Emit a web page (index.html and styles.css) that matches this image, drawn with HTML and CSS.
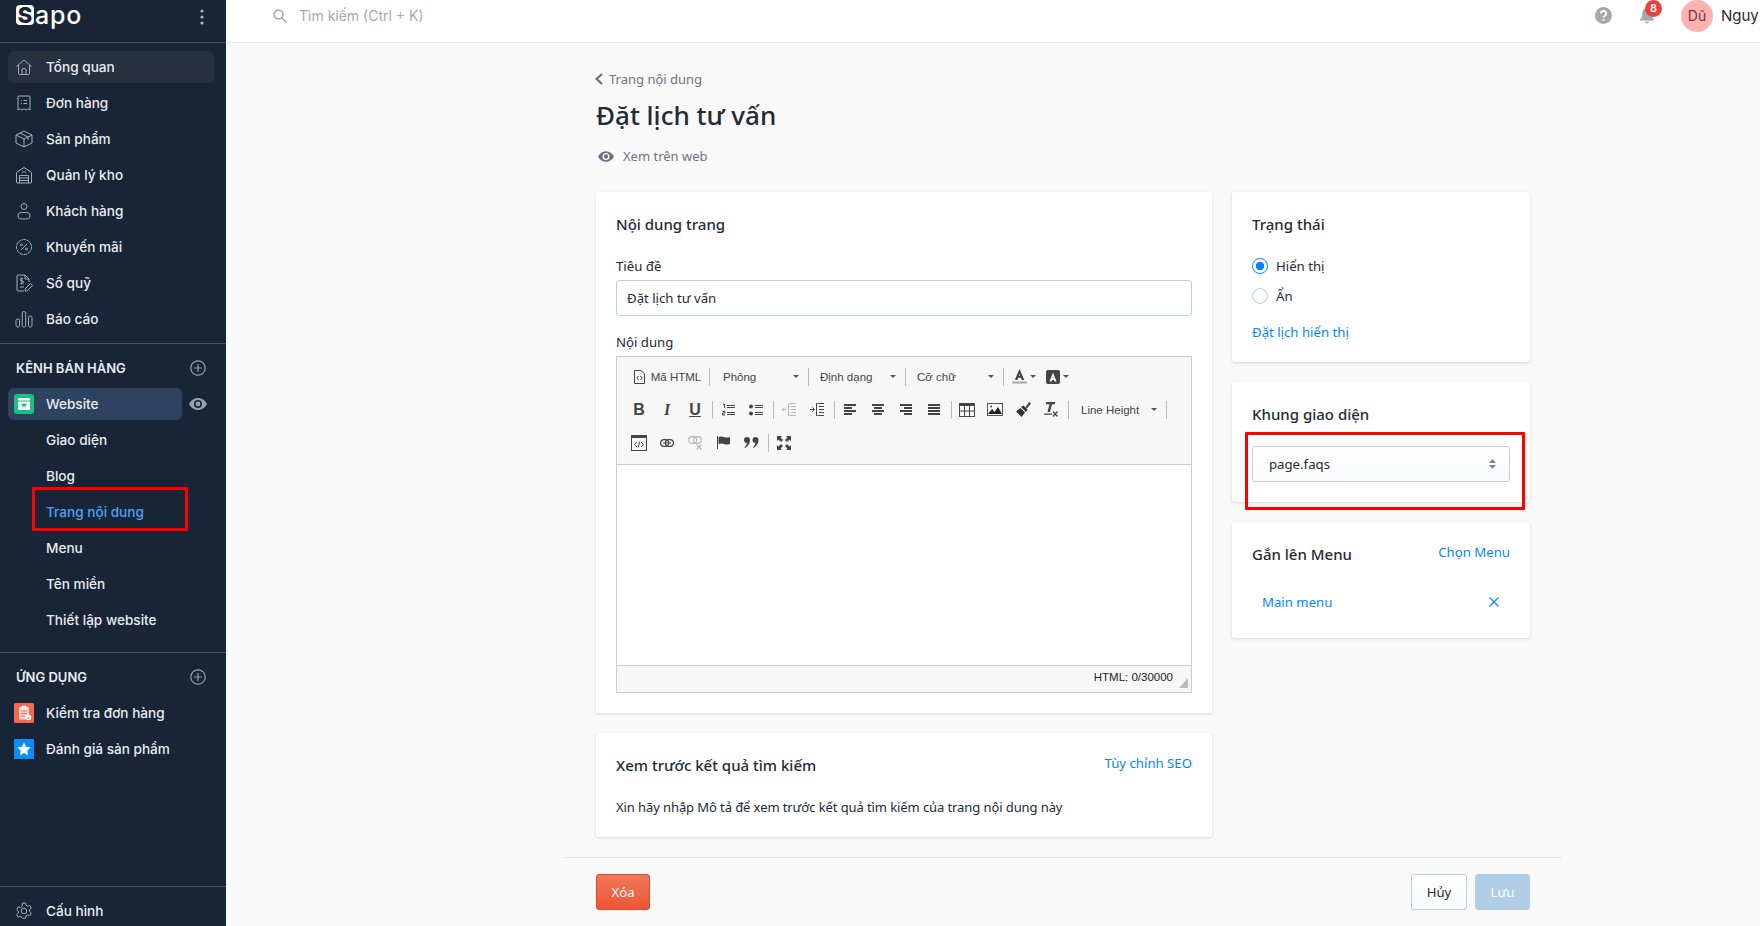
FILE: index.html
```html
<!DOCTYPE html>
<html lang="vi">
<head>
  <meta charset="UTF-8">
  <meta name="viewport" content="width=device-width, initial-scale=1.0">
  <title>Đặt lịch tư vấn</title>
  <link rel="stylesheet" href="styles.css">
</head>
<body>

<!-- Sidebar -->
<aside class="sidebar">
  <div class="logo-row">
    <div class="logo"><span class="logo-s">S</span><span class="logo-rest">apo</span></div>
    <svg class="kebab" width="4" height="16" viewBox="0 0 4 16"><circle cx="2" cy="2" r="1.6"/><circle cx="2" cy="8" r="1.6"/><circle cx="2" cy="14" r="1.6"/></svg>
  </div>

  <nav class="nav-group">
    <a class="nav-item nav-item-current">
      <span class="nav-icon"><svg class="ico" width="18" height="18" viewBox="0 0 18 18"><path d="M1.5 8.5 9 2l7.500 6.500"/><path d="M3.500 7v8.500a1 1 0 0 0 1 1h9a1 1 0 0 0 1-1V7"/><path d="M7 16.500V11.500a1 1 0 0 1 1-1h2a1 1 0 0 1 1 1v5"/></svg></span>Tổng quan
    </a>
    <a class="nav-item">
      <span class="nav-icon"><svg class="ico" width="18" height="18" viewBox="0 0 18 18"><path d="M3 3a1 1 0 0 1 1-1h10a1 1 0 0 1 1 1v13l-2-1.200-2 1.200-2-1.200-2 1.200-2-1.200L3 16z"/><path d="M6 6.500h.8M8.500 6.500H12M6 9.500h.8M8.500 9.500H12"/></svg></span>Đơn hàng
    </a>
    <a class="nav-item">
      <span class="nav-icon"><svg class="ico" width="18" height="18" viewBox="0 0 18 18"><path d="M9 1 1 5v8l8 4 8-4V5z"/><path d="M1 5l8 4 8-4M9 9v8M5 3l8 4v3"/></svg></span>Sản phẩm
    </a>
    <a class="nav-item">
      <span class="nav-icon"><svg class="ico" width="18" height="18" viewBox="0 0 18 18"><path d="M1.500 6.500 9 1.500l7.500 5V16a1 1 0 0 1-1 1h-13a1 1 0 0 1-1-1z"/><path d="M4.500 17V9.500h9V17M4.500 12h9M4.500 14.500h9M7 6h4"/></svg></span>Quản lý kho
    </a>
    <a class="nav-item">
      <span class="nav-icon"><svg class="ico" width="18" height="18" viewBox="0 0 18 18"><circle cx="9" cy="4.500" r="3"/><rect x="3" y="10.500" width="12" height="6.500" rx="3.200"/></svg></span>Khách hàng
    </a>
    <a class="nav-item">
      <span class="nav-icon"><svg class="ico" width="18" height="18" viewBox="0 0 18 18"><circle cx="9" cy="9" r="7.500" stroke-dasharray="3.600 .6"/><path d="M6 12 12 6"/><circle cx="6.500" cy="6.800" r="1"/><circle cx="11.500" cy="11.200" r="1"/></svg></span>Khuyến mãi
    </a>
    <a class="nav-item">
      <span class="nav-icon"><svg class="ico" width="18" height="18" viewBox="0 0 18 18"><path d="M9 17H3a1 1 0 0 1-1-1V2a1 1 0 0 1 1-1h7l4 4v3"/><path d="M10 1v4h4"/><path d="M8 4.500H6.500a1 1 0 0 0 0 2.500h.8a1 1 0 0 1 0 2.500H5.500M6.800 3.500v7M5 13h4"/><path d="m10 17 .5-2.500 5-5 2 2-5 5z"/></svg></span>Sổ quỹ
    </a>
    <a class="nav-item">
      <span class="nav-icon"><svg class="ico" width="18" height="18" viewBox="0 0 18 18"><rect x="1" y="9" width="3.500" height="8" rx="1.500"/><rect x="7.200" y="1.500" width="3.500" height="15.500" rx="1.500"/><rect x="13.500" y="6" width="3.500" height="11" rx="1.500"/></svg></span>Báo cáo
    </a>
  </nav>

  <section class="nav-section">
    <div class="section-head">
      <span>KÊNH BÁN HÀNG</span>
      <svg class="ico section-add" width="16" height="16" viewBox="0 0 16 16"><circle cx="8" cy="8" r="7.200"/><path d="M8 4v8M4 8h8"/></svg>
    </div>
    <div class="channel-row">
      <a class="nav-item nav-item-channel">
        <span class="nav-icon">
          <svg width="20" height="20" viewBox="0 0 20 20"><rect width="20" height="20" rx="3" fill="#1cbf82"/><rect x="4" y="4" width="12" height="12" rx="1" fill="#fff"/><rect x="4" y="6.500" width="12" height="1" fill="#1cbf82"/><path d="M7.500 9.500h5l-.7 3H8.300zM8.500 13.500h.8v.8h-.8zM11 13.500h.8v.8H11z" fill="#1cbf82"/></svg>
        </span>Website
      </a>
      <svg class="channel-eye" width="18" height="12" viewBox="0 0 18 12"><path d="M9 0C5 0 1.800 2.400 0 6c1.800 3.600 5 6 9 6s7.200-2.400 9-6c-1.800-3.600-5-6-9-6zm0 10a4 4 0 1 1 0-8 4 4 0 0 1 0 8zm0-6.400a2.400 2.400 0 1 0 0 4.800 2.400 2.400 0 0 0 0-4.800z"/></svg>
    </div>
    <a class="nav-item nav-sub">Giao diện</a>
    <a class="nav-item nav-sub">Blog</a>
    <a class="nav-item nav-sub nav-sub-active">Trang nội dung<span class="red-mark red-mark-nav"></span></a>
    <a class="nav-item nav-sub">Menu</a>
    <a class="nav-item nav-sub">Tên miền</a>
    <a class="nav-item nav-sub">Thiết lập website</a>
  </section>

  <section class="nav-section">
    <div class="section-head">
      <span>ỨNG DỤNG</span>
      <svg class="ico section-add" width="16" height="16" viewBox="0 0 16 16"><circle cx="8" cy="8" r="7.200"/><path d="M8 4v8M4 8h8"/></svg>
    </div>
    <a class="nav-item">
      <span class="nav-icon">
        <svg width="20" height="20" viewBox="0 0 20 20"><rect width="20" height="20" rx="1.500" fill="#f2694f"/><rect x="5" y="4" width="10" height="12.500" rx="1" fill="#fbd9d0"/><rect x="7.500" y="2.800" width="5" height="2.500" rx=".8" fill="#fff"/><path d="M7 8h6M7 10.500h6M7 13h4" stroke="#f2694f"/><circle cx="14.500" cy="14.500" r="2.800" fill="#fff"/><path d="m13.200 14.500 1 1 1.600-1.800" stroke="#f2694f" fill="none"/></svg>
      </span>Kiểm tra đơn hàng
    </a>
    <a class="nav-item">
      <span class="nav-icon">
        <svg width="20" height="20" viewBox="0 0 20 20"><rect width="20" height="20" fill="#0a8dfa"/><path d="m10 3.500 2 4.300 4.700.6-3.500 3.200.9 4.700-4.100-2.300-4.100 2.300.9-4.700-3.500-3.200 4.700-.6z" fill="#fff"/></svg>
      </span>Đánh giá sản phẩm
    </a>
  </section>

  <div class="sidebar-foot">
    <a class="nav-item">
      <span class="nav-icon"><svg class="ico" width="18" height="18" viewBox="0 0 18 18"><circle cx="9" cy="9" r="2.800"/><path d="M7.500 1h3l.5 2.300 1.600.9 2.200-.7 1.500 2.600-1.700 1.600v1.800l1.700 1.600-1.500 2.600-2.200-.7-1.600.9-.5 2.300h-3L7 15.300l-1.600-.9-2.200.7-1.500-2.600 1.700-1.600V9.100L1.700 7.500l1.500-2.600 2.200.7L7 4.700z" stroke-linejoin="round"/></svg></span>Cấu hình
    </a>
  </div>
</aside>

<div class="main">
  <!-- Top bar -->
  <header class="topbar">
    <svg class="search-icon" width="14" height="14" viewBox="0 0 14 14"><circle cx="5.500" cy="5.500" r="4.500"/><path d="m9 9 4.500 4.500"/></svg>
    <span class="search-text">Tìm kiếm (Ctrl + K)</span>
    <div class="topbar-right">
      <svg class="help-icon" width="17" height="17" viewBox="0 0 17 17"><circle cx="8.500" cy="8.500" r="8.500" fill="#a3a8af"/><path d="M5.900 6.500a2.600 2.600 0 1 1 3.900 2.200c-.9.500-1.300.9-1.300 1.800" fill="none" stroke="#fff" stroke-width="1.800"/><circle cx="8.500" cy="13" r="1.100" fill="#fff"/></svg>
      <div class="bell">
        <svg width="14" height="16" viewBox="0 0 14 16"><path d="M7 0c3 0 4.600 2.300 4.600 5.200 0 3 .8 4.700 2.400 6.300v1H0v-1c1.600-1.600 2.400-3.300 2.400-6.300C2.400 2.300 4 0 7 0zM5.300 13.500h3.400A1.700 1.700 0 0 1 7 15.500a1.700 1.700 0 0 1-1.700-2z" fill="#a3a8af"/></svg>
        <span class="bell-badge">8</span>
      </div>
      <span class="avatar">Dũ</span>
      <span class="user-name">Nguy</span>
    </div>
  </header>

  <main class="page">
    <a class="back-link">
      <svg class="back-arrow" width="8" height="12" viewBox="0 0 8 12"><path d="M7 1 1.500 6 7 11" fill="none" stroke="#5f6b7a" stroke-width="2"/></svg>
      Trang nội dung
    </a>
    <h1 class="page-title">Đặt lịch tư vấn</h1>
    <a class="view-link">
      <svg width="16" height="11" viewBox="0 0 18 12"><path fill="#637381" d="M9 0C5 0 1.800 2.400 0 6c1.800 3.600 5 6 9 6s7.200-2.400 9-6c-1.800-3.600-5-6-9-6zm0 10a4 4 0 1 1 0-8 4 4 0 0 1 0 8zm0-6.400a2.400 2.400 0 1 0 0 4.800 2.400 2.400 0 0 0 0-4.800z"/></svg>
      Xem trên web
    </a>

    <div class="page-grid">
      <!-- Left column -->
      <div class="page-col">
        <section class="card">
          <h2 class="card-title">Nội dung trang</h2>
          <label class="field-label field-first">Tiêu đề</label>
          <div class="text-input">Đặt lịch tư vấn</div>
          <label class="field-label">Nội dung</label>

          <div class="editor">
            <div class="toolbar">
              <div class="tb-row">
                <span class="tb-btn tb-html">
                  <svg class="tb-svg" width="11" height="14" viewBox="0 0 11 14"><path d="M.5.500h6.500l3.500 3.500v9.500H.5z" fill="none" stroke="#444"/><path d="M4.500 6 2.800 8l1.700 2M6.500 6l1.700 2-1.700 2" fill="none" stroke="#444"/></svg>
                  Mã HTML
                </span>
                <span class="tb-sep"></span>
                <span class="tb-btn tb-drop tb-font">Phông<i class="caret"></i></span>
                <span class="tb-sep"></span>
                <span class="tb-btn tb-drop tb-format">Định dạng<i class="caret"></i></span>
                <span class="tb-sep"></span>
                <span class="tb-btn tb-drop tb-size">Cỡ chữ<i class="caret"></i></span>
                <span class="tb-sep"></span>
                <span class="tb-btn tb-color">
                  <svg width="15" height="15" viewBox="0 0 15 15"><path d="M7.500 0 2.800 11h2.600l.8-2.200h2.700l.8 2.200h2.600zM6.900 6.800l.6-2 .6 2z" fill="#444"/><rect y="12.500" width="15" height="2" fill="#aaa"/></svg><i class="caret"></i>
                </span>
                <span class="tb-btn tb-color">
                  <svg width="14" height="14" viewBox="0 0 14 14"><rect width="14" height="14" rx="2" fill="#444"/><path d="M7 2.500 3.500 11.500h2l.5-1.600h2l.5 1.600h2zM6.500 8.200 7 6.500l.5 1.700z" fill="#fff"/></svg><i class="caret"></i>
                </span>
              </div>

              <div class="tb-row">
                <span class="tb-btn"><b class="tb-b">B</b></span>
                <span class="tb-btn"><i class="tb-i">I</i></span>
                <span class="tb-btn"><u class="tb-u">U</u></span>
                <span class="tb-sep"></span>
                <span class="tb-btn"><svg width="13" height="13" viewBox="0 0 13 13"><path d="M5 2.500h8M5 9.500h8M5 4.500h8M5 11.500h8" stroke="#444"/><path d="M1 1h1.500v4M.5 8.500h2.500v1.500H.5V12H3" fill="none" stroke="#444"/></svg></span>
                <span class="tb-btn"><svg width="14" height="12" viewBox="0 0 14 12"><circle cx="2" cy="2.500" r="2" fill="#444"/><circle cx="2" cy="9.500" r="2" fill="#444"/><path d="M6 1.500h8M6 3.500h8M6 8.500h8M6 10.500h8" stroke="#444"/></svg></span>
                <span class="tb-sep"></span>
                <span class="tb-btn tb-muted"><svg width="14" height="13" viewBox="0 0 14 13"><path d="M7.500.5h6.500M9 3.500h5M9 6.500h5M9 9.500h5M7.500 12.500h6.500M6.500 0v13M4.500 6.500H0M2 4.500 0 6.500l2 2" fill="none" stroke="#444"/></svg></span>
                <span class="tb-btn"><svg width="14" height="13" viewBox="0 0 14 13"><path d="M7.500.5h6.500M9 3.500h5M9 6.500h5M9 9.500h5M7.500 12.500h6.500M6.500 0v13M0 6.500h4.500M2.500 4.500l2 2-2 2" fill="none" stroke="#444"/></svg></span>
                <span class="tb-sep"></span>
                <span class="tb-btn"><svg width="12" height="11" viewBox="0 0 12 11"><path d="M0 1h12M0 4h8M0 7h12M0 10h8" stroke="#444" stroke-width="1.800"/></svg></span>
                <span class="tb-btn"><svg width="12" height="11" viewBox="0 0 12 11"><path d="M0 1h12M2 4h8M0 7h12M2 10h8" stroke="#444" stroke-width="1.800"/></svg></span>
                <span class="tb-btn"><svg width="12" height="11" viewBox="0 0 12 11"><path d="M0 1h12M4 4h8M0 7h12M4 10h8" stroke="#444" stroke-width="1.800"/></svg></span>
                <span class="tb-btn"><svg width="12" height="11" viewBox="0 0 12 11"><path d="M0 1h12M0 4h12M0 7h12M0 10h12" stroke="#444" stroke-width="1.800"/></svg></span>
                <span class="tb-sep"></span>
                <span class="tb-btn"><svg width="16" height="14" viewBox="0 0 16 14"><rect x=".5" y=".5" width="15" height="13" fill="none" stroke="#444"/><rect width="16" height="3" fill="#444"/><path d="M5.500 3v10M10.500 3v10M0 8h16" stroke="#444"/></svg></span>
                <span class="tb-btn"><svg width="16" height="13" viewBox="0 0 16 13"><rect x=".5" y=".5" width="15" height="12" fill="none" stroke="#555"/><path d="m1 11 4-5 2.500 3L11 4l4 7z" fill="#222"/><circle cx="4" cy="3.500" r="1" fill="#444"/></svg></span>
                <span class="tb-btn"><svg width="15" height="15" viewBox="0 0 15 15"><path d="m9.500 5 3.500-5 2 1.500L11 6.500z" fill="#444"/><path d="m5 5 2.500-1.500 4 4L10 10z M4.500 6 9 10.500 5.500 15 0 9.500z" fill="#333"/></svg></span>
                <span class="tb-btn"><svg width="14" height="15" viewBox="0 0 14 15"><path d="M2 0h9v2.200H8L6 10H3.500l2-7.800H2z M0 11.500h8v1.200H0z" fill="#444"/><path d="m9 9.500 4.500 5M13.500 9.500l-4.500 5" stroke="#444" stroke-width="1.300"/></svg></span>
                <span class="tb-sep"></span>
                <span class="tb-btn tb-drop tb-line">Line Height<i class="caret"></i></span>
                <span class="tb-sep"></span>
              </div>

              <div class="tb-row">
                <span class="tb-btn"><svg width="16" height="16" viewBox="0 0 16 16"><rect x=".5" y=".5" width="15" height="15" fill="none" stroke="#444"/><rect width="16" height="3" fill="#444"/><path d="M6 7 3.500 9.500 6 12M10 7l2.500 2.500L10 12M8.800 6.500l-1.600 6" fill="none" stroke="#444"/></svg></span>
                <span class="tb-btn"><svg width="14" height="8" viewBox="0 0 14 8"><rect x=".6" y=".6" width="8" height="6.800" rx="3.400" fill="none" stroke="#444" stroke-width="1.200"/><rect x="5.400" y=".6" width="8" height="6.800" rx="3.400" fill="none" stroke="#444" stroke-width="1.200"/><path d="M3 4h8" stroke="#444"/></svg></span>
                <span class="tb-btn tb-muted"><svg width="14" height="14" viewBox="0 0 14 14"><rect x=".6" y=".6" width="8" height="6.800" rx="3.400" fill="none" stroke="#444" stroke-width="1.200"/><rect x="5.400" y=".6" width="8" height="6.800" rx="3.400" fill="none" stroke="#444" stroke-width="1.200"/><path d="m8.500 8.500 5 5M13.500 8.500l-5 5" stroke="#444" stroke-width="1.300"/></svg></span>
                <span class="tb-btn"><svg width="13" height="13" viewBox="0 0 13 13"><path d="M.5 0v13" stroke="#444"/><path d="M1.500 1c2-.8 3.500-.8 5.500 0s3.500.8 6 0v7c-2.500.8-4 .8-6 0s-3.500-.8-5.500 0z" fill="#444"/></svg></span>
                <span class="tb-btn"><svg width="15" height="11" viewBox="0 0 15 11"><path d="M3 0a3 3 0 0 1 3 3c0 3.500-2 6.500-5 8l-.5-.8C2 9 2.800 7.500 3 6a3 3 0 0 1 0-6zM11.500 0a3 3 0 0 1 3 3c0 3.500-2 6.500-5 8l-.5-.8c1.500-1.200 2.300-2.700 2.500-4.200a3 3 0 0 1 0-6z" fill="#444"/></svg></span>
                <span class="tb-sep"></span>
                <span class="tb-btn"><svg width="14" height="14" viewBox="0 0 14 14"><path d="M0 0h5L3.500 1.500 6 4 4 6 1.500 3.500 0 5zM14 0v5l-1.500-1.500L10 6 8 4l2.500-2.500L9 0zM0 14V9l1.500 1.500L4 8l2 2-2.500 2.500L5 14zM14 14H9l1.500-1.500L8 10l2-2 2.500 2.500L14 9z" fill="#444"/></svg></span>
              </div>
            </div>
            <div class="editor-body"></div>
            <div class="editor-status">
              <span>HTML: 0/30000</span>
              <i class="resize-grip"></i>
            </div>
          </div>
        </section>

        <section class="card card-seo">
          <div class="card-head">
            <h2 class="card-title">Xem trước kết quả tìm kiếm</h2>
            <a class="link">Tùy chỉnh SEO</a>
          </div>
          <p class="seo-text">Xin hãy nhập Mô tả để xem trước kết quả tìm kiếm của trang nội dung này</p>
        </section>
      </div>

      <!-- Right column -->
      <div class="page-col">
        <section class="card">
          <h2 class="card-title">Trạng thái</h2>
          <div class="radio-row radio-first"><span class="radio radio-on"></span>Hiển thị</div>
          <div class="radio-row"><span class="radio"></span>Ẩn</div>
          <a class="link schedule-link">Đặt lịch hiển thị</a>
        </section>

        <section class="card card-layout">
          <h2 class="card-title">Khung giao diện</h2>
          <div class="select-box">
            page.faqs
            <svg width="7" height="10" viewBox="0 0 7 10"><path d="M3.500 0 7 4H0zM3.500 10 0 6h7z" fill="#7d8894"/></svg>
          </div>
          <span class="red-mark red-mark-layout"></span>
        </section>

        <section class="card card-menu">
          <div class="card-head">
            <h2 class="card-title">Gắn lên Menu</h2>
            <a class="link">Chọn Menu</a>
          </div>
          <div class="menu-row">
            <a class="link">Main menu</a>
            <svg width="10" height="10" viewBox="0 0 10 10"><path d="m.5.500 9 9M9.500.500l-9 9" stroke="#0088ff" stroke-width="1.200"/></svg>
          </div>
        </section>
      </div>
    </div>

    <div class="page-foot">
      <button class="btn btn-danger">Xóa</button>
      <div class="foot-right">
        <button class="btn btn-plain">Hủy</button>
        <button class="btn btn-save">Lưu</button>
      </div>
    </div>
  </main>
</div>

</body>
</html>
```

FILE: styles.css
```css
* {
  box-sizing: border-box;
}
body {
  margin: 0;
  height: 926px;
  overflow: hidden;
  display: flex;
  background-color: #f9f9f9;
  font-family: "Noto Sans", sans-serif;
  font-size: 14px;
  color: #212b35;
}
.ico {
  fill: none;
  stroke: currentColor;
  stroke-width: 1;
}

/* Sidebar */
.sidebar {
  position: relative;
  width: 226px;
  height: 926px;
  flex-shrink: 0;
  display: flex;
  flex-direction: column;
  overflow: hidden;
  background-color: #182537;
  color: #e8ebef;
  font-family: Inter, sans-serif;
  font-size: 13.600px;
  font-weight: 500;
}
.logo-row {
  height: 43px;
  flex-shrink: 0;
  display: flex;
  justify-content: space-between;
  align-items: flex-start;
  padding: 0 22px 0 16px;
  border-bottom: 1px solid #46505e;
}
.logo {
  display: flex;
  align-items: flex-start;
  height: 31px;
  color: #fff;
}
.logo-s {
  width: 18px;
  height: 20px;
  margin-top: 5px;
  background-color: #fff;
  color: #182537;
  border-radius: 4px;
  font-size: 22px;
  line-height: 20px;
  font-weight: 800;
  text-align: center;
}
.logo-rest {
  margin-left: 1px;
  font-size: 25px;
  line-height: 31px;
  letter-spacing: 0.8px;
  font-weight: 500;
}
.kebab {
  margin-top: 9px;
  fill: #aab1bb;
}
.nav-group {
  padding: 8px 8px 4px;
}
.nav-item {
  height: 32px;
  margin-bottom: 4px;
  display: flex;
  align-items: center;
  padding: 0 0 1px 6px;
  border-radius: 6px;
  white-space: nowrap;
}
.nav-item-current {
  width: 206px;
  background-color: #26303f;
}
.nav-icon {
  width: 20px;
  height: 20px;
  margin-right: 12px;
  display: flex;
  justify-content: center;
  align-items: center;
  color: #a6adb6;
}
.nav-icon svg {
  display: block;
}
.nav-section {
  padding: 0 8px 12px;
  border-top: 1px solid #46505e;
}
.section-head {
  height: 44px;
  display: flex;
  justify-content: space-between;
  align-items: center;
  padding: 4px 8px 0 8px;
  font-size: 13px;
  font-weight: 600;
  color: #e8ebef;
}
.section-add {
  color: #98a1ac;
  stroke-width: 1.2;
  margin: 0 4px 0 0;
}
.channel-row {
  display: flex;
  align-items: flex-start;
}
.nav-item-channel {
  width: 174px;
  background-color: #2d4360;
}
.channel-eye {
  margin: 10px 0 0 7px;
  fill: #98a1ac;
}
.nav-sub {
  position: relative;
  padding-left: 38px;
}
.nav-sub-active {
  color: #4ba3f5;
}
.sidebar-foot {
  position: absolute;
  left: 0;
  right: 0;
  bottom: 0;
  height: 40px;
  padding: 8px 8px 0;
  border-top: 1px solid #46505e;
  background-color: #182537;
}

/* Red marks drawn over the screenshot */
.red-mark {
  position: absolute;
  border: 3px solid #f00;
  border-radius: 1px;
  pointer-events: none;
}
.red-mark-nav {
  left: 24px;
  top: -9px;
  width: 156px;
  height: 44px;
}
.red-mark-layout {
  left: 13px;
  top: 50px;
  width: 280px;
  height: 78px;
}

/* Top bar */
.main {
  flex: 1;
  min-width: 0;
  display: flex;
  flex-direction: column;
}
.topbar {
  height: 43px;
  flex-shrink: 0;
  display: flex;
  align-items: center;
  padding: 0 0 11px 47px;
  background-color: #fff;
  border-bottom: 1px solid #e3e5e8;
  font-family: Inter, sans-serif;
}
.search-icon {
  fill: none;
  stroke: #a3a8af;
  stroke-width: 1.500;
}
.search-text {
  margin-left: 12px;
  color: #a3a9b3;
}
.topbar-right {
  margin-left: auto;
  display: flex;
  align-items: center;
}
.help-icon {
  display: block;
}
.bell {
  position: relative;
  width: 14px;
  height: 16px;
  margin: 0 27px 0 28px;
}
.bell-badge {
  position: absolute;
  left: 5px;
  top: -8px;
  width: 17px;
  height: 17px;
  border-radius: 50%;
  background-color: #e8413f;
  color: #fff;
  font-size: 11px;
  line-height: 17px;
  font-weight: 600;
  text-align: center;
}
.avatar {
  width: 32px;
  height: 32px;
  border-radius: 50%;
  background-color: #ffb1b1;
  color: #6b3d3d;
  line-height: 32px;
  text-align: center;
}
.user-name {
  width: 39px;
  margin-left: 8px;
  white-space: nowrap;
  font-size: 15px;
  color: #212b35;
}

/* Page */
.page {
  width: 934px;
  margin-left: 370px;
  padding-top: 26px;
}
.back-link {
  display: flex;
  align-items: center;
  gap: 6px;
  height: 20px;
  font-size: 13px;
  color: #6b7582;
}
.back-arrow {
  margin-left: -1px;
}
.page-title {
  margin: 9px 0 0;
  font-size: 26px;
  line-height: 34px;
  font-weight: 500;
  color: #212b35;
}
.view-link {
  display: flex;
  align-items: center;
  gap: 9px;
  height: 20px;
  margin-top: 14px;
  padding-left: 2px;
  font-size: 13px;
  color: #6b7582;
}
.page-grid {
  display: grid;
  grid-template-columns: 616px 298px;
  gap: 20px;
  margin-top: 26px;
}
.page-col {
  display: flex;
  flex-direction: column;
  gap: 20px;
}
.card {
  position: relative;
  padding: 20px;
  background-color: #fff;
  border-radius: 3px;
  box-shadow: 0 1px 3px rgba(63, 63, 68, 0.18);
}
.card-title {
  margin: 0;
  font-size: 15px;
  line-height: 24px;
  font-weight: 500;
}
.card-head {
  display: flex;
  justify-content: space-between;
  align-items: flex-start;
}
.link {
  color: #0088ff;
  font-size: 13.200px;
}
.card-head .link {
  line-height: 20px;
}
.field-label {
  display: block;
  margin: 16px 0 4px;
  line-height: 20px;
  font-size: 13.200px;
}
.field-first {
  margin-top: 20px;
}
.text-input {
  height: 36px;
  padding: 0 10px;
  border: 1px solid #c4cdd5;
  border-radius: 3px;
  line-height: 34px;
  font-size: 13.200px;
}

/* Editor */
.editor {
  height: 337px;
  display: flex;
  flex-direction: column;
  border: 1px solid #ccc;
  font-family: "Liberation Sans", Arial, sans-serif;
  font-size: 11.500px;
  color: #444;
}
.toolbar {
  height: 108px;
  flex-shrink: 0;
  padding: 3px 0 0 8px;
  background-color: #f7f7f7;
  border-bottom: 1px solid #ccc;
}
.tb-row {
  height: 33px;
  display: flex;
  align-items: center;
}
.tb-btn {
  width: 28px;
  height: 33px;
  flex-shrink: 0;
  display: flex;
  justify-content: center;
  align-items: center;
}
.tb-muted {
  opacity: 0.35;
}
.tb-sep {
  width: 1px;
  height: 18px;
  flex-shrink: 0;
  margin: 0 1px 0 3px;
  background-color: #bbb;
}
.tb-html {
  width: 81px;
  gap: 6px;
  padding-left: 4px;
}
.tb-drop {
  justify-content: space-between;
  padding: 0 6px 0 10px;
}
.tb-font {
  width: 94px;
  padding-left: 12px;
}
.tb-format {
  width: 92px;
}
.tb-size {
  width: 93px;
}
.tb-line {
  width: 93px;
  padding-left: 11px;
}
.tb-color {
  width: 34px;
  gap: 3px;
  justify-content: flex-start;
  padding-left: 7px;
}
.caret {
  width: 0;
  height: 0;
  border-left: 3px solid transparent;
  border-right: 3px solid transparent;
  border-top: 3px solid #555;
}
.tb-b, .tb-i, .tb-u {
  font-size: 16px;
  color: #444;
}
.tb-i {
  font-family: "Liberation Serif", serif;
  font-weight: 700;
}
.tb-u {
  font-weight: 700;
}
.editor-body {
  flex: 1;
  background-color: #fff;
}
.editor-status {
  position: relative;
  height: 27px;
  flex-shrink: 0;
  padding: 0 18px 0 0;
  background-color: #f7f7f7;
  border-top: 1px solid #ccc;
  text-align: right;
  line-height: 22px;
  color: #222;
}
.resize-grip {
  position: absolute;
  right: 3px;
  bottom: 4px;
  width: 0;
  height: 0;
  border-left: 9px solid transparent;
  border-bottom: 10px solid #bbb;
}

/* Seo card */
.card-seo {
  height: 104px;
}
.seo-text {
  margin: 20px 0 0;
  line-height: 20px;
  font-size: 13px;
  letter-spacing: -0.09px;
}

/* Radios */
.radio-row {
  height: 30px;
  display: flex;
  align-items: center;
  gap: 8px;
  font-size: 13.200px;
}
.radio-first {
  margin-top: 15px;
}
.radio {
  width: 16px;
  height: 16px;
  border-radius: 50%;
  border: 1px solid #c4cdd5;
  background: linear-gradient(#fff, #f5f7f9);
}
.radio-on {
  border: 1.500px solid #0088ff;
  background: radial-gradient(circle, #0088ff 0 4px, #fff 4.500px);
}
.schedule-link {
  display: block;
  margin-top: 11px;
  line-height: 20px;
}

.card-layout .card-title {
  margin-bottom: 20px;
}
.select-box {
  height: 36px;
  display: flex;
  justify-content: space-between;
  align-items: center;
  padding: 0 13px 0 16px;
  background: linear-gradient(#fff, #f9fafb);
  border: 1px solid #c4cdd5;
  border-radius: 3px;
  font-size: 13.200px;
}

.card-menu {
  padding-bottom: 26px;
}
.menu-row {
  display: flex;
  justify-content: space-between;
  align-items: center;
  height: 20px;
  margin-top: 26px;
  padding: 0 11px 0 10px;
}

/* Footer */
.page-foot {
  width: 998px;
  margin: 20px 0 0 -32px;
  padding: 16px 32px 0;
  display: flex;
  justify-content: space-between;
  border-top: 1px solid #e3e5e8;
}
.foot-right {
  display: flex;
  gap: 8px;
}
.btn {
  height: 36px;
  border-radius: 3px;
  border: 1px solid #c4cdd5;
  font-family: "Noto Sans", sans-serif;
  font-size: 13.200px;
}
.btn-danger {
  width: 54px;
  background: linear-gradient(#f0785a, #ee5533);
  border-color: #dd4a2a;
  color: #fff;
}
.btn-plain {
  width: 56px;
  background: linear-gradient(#fff, #f9fafb);
  color: #212b35;
}
.btn-save {
  width: 55px;
  background-color: #b2cde6;
  border-color: #b2cde6;
  color: #fff;
}
```
